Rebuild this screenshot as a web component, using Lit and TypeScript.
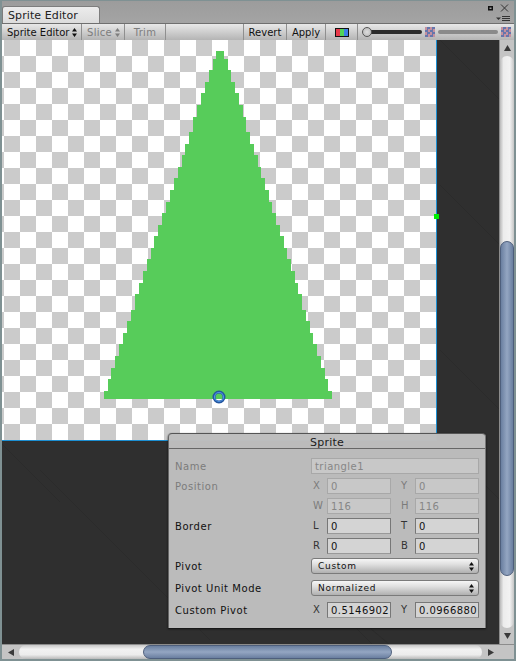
import { LitElement, html, css, svg } from "lit";
import { customElement } from "lit/decorators.js";

const TOPS = [51,59,70,82,93,105,117,132,144,155,167,178,190,202,213,225,236,248,259,271,283,294,310,321,333,344,356,368,379,391];
const LEFT = [216,213,209,205,201,197,193,189,185,182,178,174,170,166,162,158,154,151,147,143,139,135,131,127,123,119,115,111,108,104];

function trianglePath(): string {
  let left = "";
  let right = "";
  TOPS.forEach((t, i) => {
    const next = i + 1 < TOPS.length ? TOPS[i + 1] : 399;
    const r = Math.round(224 + i * 3.724);
    left = `L${LEFT[i]} ${next}L${LEFT[i]} ${t}` + left;
    right += `L${r} ${t}L${r} ${next}`;
  });
  return `M${LEFT[LEFT.length - 1]} 399` + left + right + "Z";
}

const updown = html`<svg class="ud" width="5" height="9" viewBox="0 0 5 9"><path d="M2.5 0L5 3.5H0ZM2.5 9L0 5.5H5Z"/></svg>`;

@customElement("app-root")
export class AppRoot extends LitElement {
  static styles = css`
    :host {
      display: block;
      width: 516px;
      height: 661px;
      font-family: "DejaVu Sans", sans-serif;
      font-size: 10px;
      color: #111;
      overflow: hidden;
    }
    .window {
      box-sizing: border-box;
      width: 516px;
      height: 661px;
      padding: 1px 2px 2px 2px;
      background: #7f9193;
      display: flex;
      flex-direction: column;
    }
    .tabbar {
      height: 22px;
      flex: none;
      background: linear-gradient(#9c9c9c, #a4a4a4);
      display: flex;
      justify-content: space-between;
      align-items: flex-end;
    }
    .tab {
      box-sizing: border-box;
      width: 98px;
      height: 17px;
      border-radius: 3px 3px 0 0;
      border: 1px solid #7d7d7d;
      border-bottom: 0;
      background: linear-gradient(#ececec, #dcdcdc);
      padding: 2px 0 0 5px;
      font-size: 11px;
      letter-spacing: 0.1px;
      line-height: 14px;
      color: #222;
    }
    .winicons { width: 30px; height: 22px; align-self: flex-start; }
    .toolbar {
      height: 17px;
      flex: none;
      display: flex;
      background: linear-gradient(#e8e8e8, #b4b4b4);
      border-top: 1px solid #6f6f6f;
      box-sizing: border-box;
      align-items: stretch;
    }
    .tb {
      box-sizing: border-box;
      border-right: 1px solid #8f8f8f;
      display: flex;
      align-items: center;
      justify-content: space-between;
      padding: 1px 4px 0 5px;
      flex: none;
      line-height: 14px;
    }
    .tb.off { color: #7d7d7d; letter-spacing: 0.3px; }
    .tb.center { justify-content: center; padding: 1px 0 0 0; }
    .ud { fill: currentColor; flex: none; }
    .w-se { width: 80px; }
    .w-sl { width: 43px; }
    .w-tr { width: 41px; }
    .w-sp { width: 78px; }
    .w-rv { width: 43px; }
    .w-ap { width: 39px; }
    .w-cl { width: 32px; }
    .swatch {
      width: 12px;
      height: 7px;
      border: 1px solid #111;
      background: linear-gradient(90deg, #e8394a 0 33%, #52d458 33% 66%, #3c7ee8 66%);
    }
    .sliders {
      flex: 1;
      display: flex;
      align-items: center;
      padding: 0 0 1px 4px;
    }
    .thumbknob {
      box-sizing: border-box;
      width: 10px;
      height: 10px;
      border-radius: 50%;
      border: 1px solid #555;
      background: radial-gradient(#dedede, #b4b4b4);
      margin-right: -3px;
      flex: none;
      position: relative;
    }
    .rail { height: 4px; border-radius: 2px; flex: none; }
    .rail.a { width: 53px; background: #2c2c2c; }
    .rail.b { width: 60px; background: #8a8a8a; margin-left: 3px; }
    .chk {
      width: 10px;
      height: 10px;
      flex: none;
      margin-left: 3px;
      background: conic-gradient(#6676ac 25%, #c4909f 0 50%, #6676ac 0 75%, #c4909f 0);
      background-size: 5px 5px;
    }
    .body { flex: 1; display: flex; min-height: 0; }
    .area {
      flex: 1;
      position: relative;
      background: #2f2f2f;
      overflow: hidden;
    }
    .canvas {
      box-sizing: border-box;
      width: 435px;
      height: 401px;
      border-right: 1px solid #1c8fd2;
      border-bottom: 1px solid #1c8fd2;
      background: conic-gradient(#fff 25%, #cbcbcb 0 50%, #fff 0 75%, #cbcbcb 0);
      background-size: 32px 32px;
      background-position: 2px 0;
    }
    .overlay { position: absolute; left: 0; top: 0; }
    .vbar {
      width: 14px;
      flex: none;
      background: #c4c4c4;
      display: flex;
      flex-direction: column;
      align-items: center;
      border-left: 1px solid #8c8c8c;
      box-sizing: content-box;
    }
    .arrowbox { flex: none; display: flex; align-items: center; justify-content: center; color: #333; }
    .arrowbox svg { fill: #3a3a3a; }
    .vbar .arrowbox { height: 16px; width: 14px; }
    .vtrack {
      flex: 1;
      width: 14px;
      box-sizing: border-box;
      border-radius: 7px;
      background: linear-gradient(90deg, #b8b8b8, #ececec 25%, #f2f2f2 70%, #c6c6c6);
      padding-top: 185px;
      padding-bottom: 52px;
      display: flex;
    }
    .vthumb {
      flex: 1;
      border-radius: 7px;
      border: 1px solid #4e5f7c;
      background: linear-gradient(90deg, #6a7fa0, #94a6c2 50%, #6a7fa0);
    }
    .hrow { height: 14px; flex: none; display: flex; background: #c4c4c4; border-top: 1px solid #8c8c8c; }
    .hrow .arrowbox { width: 17px; }
    .htrack {
      width: 463px;
      flex: none;
      box-sizing: border-box;
      border-radius: 7px;
      background: linear-gradient(#c8c8c8, #f2f2f2 30%, #ececec 70%, #b8b8b8);
      padding-left: 124px;
      padding-right: 90px;
      display: flex;
    }
    .hthumb {
      flex: 1;
      border-radius: 7px;
      border: 1px solid #4e5f7c;
      background: linear-gradient(#6a7fa0, #94a6c2 50%, #6a7fa0);
    }
    .corner { flex: 1; background: #c4c4c4; }
    .panel {
      position: absolute;
      left: 166px;
      top: 393px;
      width: 318px;
      height: 195px;
      box-sizing: border-box;
      background: rgba(189, 189, 189, 0.99);
      border-radius: 4px 4px 0 0;
      border-top: 1px solid #555;
      border-left: 1px solid #666;
      border-right: 1px solid #777;
      box-shadow: 0 1px 2px #111;
    }
    .ptitle {
      height: 14px;
      border-bottom: 1px solid #666;
      text-align: center;
      font-size: 11px;
      line-height: 17px;
      letter-spacing: 0.2px;
      color: #1c1c1c;
    }
    .rows {
      padding: 9px 6px 0 6px;
      display: flex;
      flex-direction: column;
      gap: 4px;
    }
    .row { display: flex; height: 16px; align-items: center; line-height: 16px; }
    .row.wide { margin-top: 2px; }
    .lbl { width: 136px; height: 16px; flex: none; letter-spacing: 0.55px; padding-top: 1px; box-sizing: border-box; }
    .dis { color: #7b7b7b; }
    .pair { display: flex; flex: 1; }
    .c1 { width: 90px; flex: none; display: flex; }
    .c2 { flex: 1; display: flex; }
    .k { flex: none; width: 16px; padding-left: 2px; box-sizing: border-box; letter-spacing: 0.3px; color: #333; }
    .k.dis { color: #7b7b7b; }
    .c2 .k { width: 14px; padding-left: 0; }
    .c1 .in { width: 64px; flex: none; }
    .c2 .in { flex: 1; }
    .in {
      box-sizing: border-box;
      height: 16px;
      border: 1px solid #777;
      border-bottom-color: #999;
      background: #d4d4d4;
      padding: 0 0 0 3px;
      line-height: 15px;
      overflow: hidden;
      white-space: nowrap;
      letter-spacing: 0.45px;
      color: #111;
    }
    .in.dis { border-color: #a8a8a8; background: #c8c8c8; color: #868686; }
    .sel {
      box-sizing: border-box;
      flex: 1;
      height: 16px;
      border: 1px solid #7a7a7a;
      border-radius: 3px;
      background: linear-gradient(#f6f6f6, #dedede 40%, #b0b0b0);
      display: flex;
      align-items: center;
      justify-content: space-between;
      padding: 0 4px 0 6px;
      font-size: 9px;
      letter-spacing: 0.7px;
      line-height: 14px;
    }
    .name { flex: 1; }
  `;

  field(k: string, v: string, dis = false) {
    return html`<span class="k ${dis ? "dis" : ""}">${k}</span><div class="in ${dis ? "dis" : ""}">${v}</div>`;
  }

  pair(a: string, av: string, b: string, bv: string, dis = false) {
    return html`<div class="pair">
      <div class="c1">${this.field(a, av, dis)}</div>
      <div class="c2">${this.field(b, bv, dis)}</div>
    </div>`;
  }

  render() {
    return html`
      <div class="window">
        <div class="tabbar">
          <div class="tab">Sprite Editor</div>
          <svg class="winicons" width="30" height="22" viewBox="0 0 30 22">
            <rect x="4.75" y="5.75" width="3.5" height="3" fill="none" stroke="#111" stroke-width="1.5"/>
            <path d="M17 3.5L24 10.5M24 3.5L17 10.5" stroke="#333" stroke-width="1" fill="none"/>
            <path d="M12 16.5h5l-2.5 2.5z" fill="#333"/>
            <path d="M18 15.5h8M18 17.5h8M18 19.5h8" stroke="#333" stroke-width="1" fill="none"/>
          </svg>
        </div>
        <div class="toolbar">
          <div class="tb w-se"><span>Sprite Editor</span>${updown}</div>
          <div class="tb off w-sl"><span>Slice</span>${updown}</div>
          <div class="tb off center w-tr"><span>Trim</span></div>
          <div class="tb w-sp"></div>
          <div class="tb center w-rv"><span>Revert</span></div>
          <div class="tb center w-ap"><span>Apply</span></div>
          <div class="tb center w-cl"><div class="swatch"></div></div>
          <div class="sliders">
            <div class="thumbknob"></div><div class="rail a"></div><div class="chk"></div>
            <div class="rail b"></div><div class="chk"></div>
          </div>
        </div>
        <div class="body">
          <div class="area">
            <div class="canvas"></div>
            <svg class="overlay" width="498" height="605" viewBox="2 40 498 605">
              ${svg`
                <path d="M440 40L500 100M440 185L500 245M440 350L500 410M0 442L60 502M170 442L380 652M40 470L210 640M370 628L390 645M440 440L500 500" stroke="#2b2b2b" stroke-width="1" fill="none"/>
                <path d="${trianglePath()}" fill="#57cc5a"/>
                <rect x="434" y="214" width="5" height="5" fill="#00f000"/>
                <circle cx="219" cy="397" r="5" fill="none" stroke="#24569f" stroke-width="3"/>
                <circle cx="219" cy="397" r="4.5" fill="none" stroke="#4d94e6" stroke-width="1.2"/>
              `}
            </svg>
            <div class="panel">
              <div class="ptitle">Sprite</div>
              <div class="rows">
                <div class="row"><span class="lbl dis">Name</span><div class="in dis name">triangle1</div></div>
                <div class="row"><span class="lbl dis">Position</span>${this.pair("X", "0", "Y", "0", true)}</div>
                <div class="row"><span class="lbl"></span>${this.pair("W", "116", "H", "116", true)}</div>
                <div class="row"><span class="lbl">Border</span>${this.pair("L", "0", "T", "0")}</div>
                <div class="row"><span class="lbl"></span>${this.pair("R", "0", "B", "0")}</div>
                <div class="row"><span class="lbl">Pivot</span><div class="sel"><span>Custom</span>${updown}</div></div>
                <div class="row wide"><span class="lbl">Pivot Unit Mode</span><div class="sel"><span>Normalized</span>${updown}</div></div>
                <div class="row wide"><span class="lbl">Custom Pivot</span>${this.pair("X", "0.5146902", "Y", "0.0966880")}</div>
              </div>
            </div>
          </div>
          <div class="vbar">
            <div class="arrowbox"><svg width="7" height="6" viewBox="0 0 7 6"><path d="M3.5 0L7 6H0Z"/></svg></div>
            <div class="vtrack"><div class="vthumb"></div></div>
            <div class="arrowbox"><svg width="7" height="6" viewBox="0 0 7 6"><path d="M0 0H7L3.5 6Z"/></svg></div>
          </div>
        </div>
        <div class="hrow">
          <div class="arrowbox"><svg width="6" height="7" viewBox="0 0 6 7"><path d="M6 0V7L0 3.5Z"/></svg></div>
          <div class="htrack"><div class="hthumb"></div></div>
          <div class="arrowbox"><svg width="6" height="7" viewBox="0 0 6 7"><path d="M0 0L6 3.5L0 7Z"/></svg></div>
          <div class="corner"></div>
        </div>
      </div>
    `;
  }
}
